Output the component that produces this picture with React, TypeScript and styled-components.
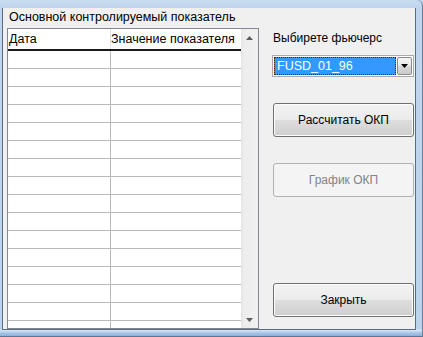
import styled, { createGlobalStyle } from 'styled-components'

const GlobalStyle = createGlobalStyle`
    html, body {
        margin: 0;
        padding: 0;
        background: #c4d9ef;
    }
    body {
        font-family: "Liberation Sans", Arial, sans-serif;
        font-size: 12px;
        color: #000;
    }
`

const Frame = styled.div`
    width: 423px;
    height: 337px;
    box-sizing: border-box;
    padding: 8px 6px 6px 2px;
    display: flex;
    border-right: 1px solid #6b7f99;
    border-bottom: 1px solid #5e7595;
    border-top-right-radius: 6px;
    background: linear-gradient(
        to bottom,
        #c9dcf1 0px,
        #c0d6ee 8px,
        #bcd3ed 329px,
        #dce9f7 330px,
        #a6c5e6 333px,
        #84aad6 337px
    );
    overflow: hidden;
`

const Client = styled.div`
    flex: 1;
    display: flex;
    flex-direction: column;
    background: #f0f0f0;
    border: 1px solid #5a6b80;
    border-top: none;
    padding-left: 4px;
    overflow: hidden;
`

const Title = styled.div`
    height: 20px;
    line-height: 19px;
    padding-left: 2px;
    font-size: 12.5px;
    flex-shrink: 0;
`

const Body = styled.div`
    display: flex;
    align-items: flex-start;
`

const List = styled.div`
    width: 252px;
    height: 301px;
    box-sizing: border-box;
    border: 1px solid #828790;
    background: #fff;
    display: flex;
    flex-shrink: 0;
`

const Grid = styled.div`
    flex: 1;
    display: flex;
    flex-direction: column;
    overflow: hidden;
`

const Header = styled.div`
    display: flex;
    height: 22px;
    box-sizing: border-box;
    border-bottom: 2px solid #1a1a1a;
    flex-shrink: 0;
`

const HeaderCell = styled.div<{ $first?: boolean }>`
    box-sizing: border-box;
    flex: ${(p) => (p.$first ? '0 0 103px' : '1')};
    line-height: 21px;
    font-size: 12.5px;
    padding-left: ${(p) => (p.$first ? '1px' : '0')};
    border-right: ${(p) => (p.$first ? '1px solid #e3e3e3' : 'none')};
    white-space: nowrap;
    overflow: hidden;
`

const Row = styled.div`
    display: flex;
    height: 18px;
    box-sizing: border-box;
    border-bottom: 1px solid #b9b9b9;
    flex-shrink: 0;
`

const Cell = styled.div<{ $first?: boolean }>`
    box-sizing: border-box;
    flex: ${(p) => (p.$first ? '0 0 103px' : '1')};
    border-right: ${(p) => (p.$first ? '1px solid #b9b9b9' : 'none')};
`

const ScrollBar = styled.div`
    width: 17px;
    flex-shrink: 0;
    display: flex;
    flex-direction: column;
    justify-content: space-between;
    background: linear-gradient(to right, #e4e4e4 0px, #ededed 3px, #f1f1f1 100%);
`

const ScrollArrow = styled.div`
    height: 17px;
    display: flex;
    align-items: center;
    justify-content: center;
`

const Panel = styled.div`
    width: 142px;
    margin-left: 13px;
    display: flex;
    flex-direction: column;
    flex-shrink: 0;
`

const Label = styled.div`
    margin-top: 1px;
    line-height: 18px;
    padding-left: 1px;
    white-space: nowrap;
`

const Combo = styled.div`
    margin-top: 8px;
    height: 22px;
    box-sizing: border-box;
    border: 1px solid #a9a9a9;
    background: #fff;
    padding: 1px;
    display: flex;
    gap: 1px;
`

const ComboField = styled.div`
    flex: 1;
    box-sizing: border-box;
    background: #3399ff;
    color: #fff;
    border: 1px dotted #3a2400;
    line-height: 16px;
    padding-left: 2px;
    font-size: 12.5px;
`

const DropButton = styled.div`
    width: 15px;
    box-sizing: border-box;
    border: 1px solid #8a8a8a;
    border-radius: 2px;
    background: linear-gradient(to bottom, #f4f4f4 0%, #e8e8e8 50%, #d8d8d8 51%, #cbcbcb 100%);
    display: flex;
    align-items: center;
    justify-content: center;
`

const Button = styled.div<{ $top: number; $disabled?: boolean }>`
    margin-top: ${(p) => p.$top}px;
    margin-left: 1px;
    width: 141px;
    height: 34px;
    box-sizing: border-box;
    border: 1px solid ${(p) => (p.$disabled ? '#adb2b5' : '#707070')};
    border-radius: 3px;
    background: ${(p) =>
        p.$disabled
            ? '#f4f4f4'
            : 'linear-gradient(to bottom, #f2f2f2 0%, #ebebeb 50%, #dddddd 51%, #cfcfcf 100%)'};
    box-shadow: inset 0 0 0 1px ${(p) => (p.$disabled ? '#f4f4f4' : '#fcfcfc')};
    color: ${(p) => (p.$disabled ? '#838383' : '#000')};
    display: flex;
    align-items: center;
    justify-content: center;
    white-space: nowrap;
`

const Triangle = ({ up, color }: { up?: boolean; color: string }) => (
    <svg width="7" height="4" viewBox="0 0 7 4">
        <polygon points={up ? '0,4 7,4 3.5,0' : '0,0 7,0 3.5,4'} fill={color} />
    </svg>
)

const rows = Array.from({ length: 16 }, (_, i) => i)

export default function App() {
    return (
        <>
            <GlobalStyle />
            <Frame>
                <Client>
                    <Title>Основной контролируемый показатель</Title>
                    <Body>
                        <List>
                            <Grid>
                                <Header>
                                    <HeaderCell $first>Дата</HeaderCell>
                                    <HeaderCell>Значение показателя</HeaderCell>
                                </Header>
                                {rows.map((r) => (
                                    <Row key={r}>
                                        <Cell $first />
                                        <Cell />
                                    </Row>
                                ))}
                            </Grid>
                            <ScrollBar>
                                <ScrollArrow>
                                    <Triangle up color="#5e5e5e" />
                                </ScrollArrow>
                                <ScrollArrow>
                                    <Triangle color="#5e5e5e" />
                                </ScrollArrow>
                            </ScrollBar>
                        </List>
                        <Panel>
                            <Label>Выбирете фьючерс</Label>
                            <Combo>
                                <ComboField>FUSD_01_96</ComboField>
                                <DropButton>
                                    <Triangle color="#000" />
                                </DropButton>
                            </Combo>
                            <Button $top={26}>Рассчитать ОКП</Button>
                            <Button $top={26} $disabled>
                                График ОКП
                            </Button>
                            <Button $top={86}>Закрыть</Button>
                        </Panel>
                    </Body>
                </Client>
            </Frame>
        </>
    )
}
